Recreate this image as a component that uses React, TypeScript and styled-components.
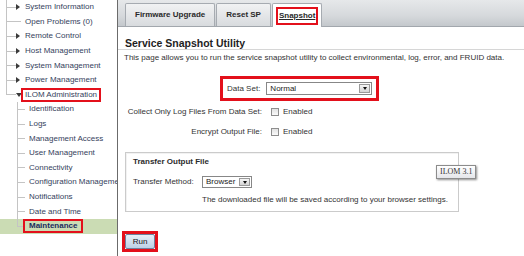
import React from 'react'
import styled, { createGlobalStyle } from 'styled-components'

const GlobalStyle = createGlobalStyle`
    html, body {
        margin: 0;
        padding: 0;
        background: #fff;
    }

    body {
        font-family: "Liberation Sans", Arial, sans-serif;
        font-size: 8px;
        line-height: 10px;
        color: #333;
    }
`

const RED = '#e3101b'
const LINE = '#c4c4c4'

const Page = styled.div`
    display: flex;
    width: 524px;
    height: 256px;
    overflow: hidden;
    background: #fff;
`

/* ---------- sidebar tree ---------- */

const Sidebar = styled.div`
    width: 117px;
    flex-shrink: 0;
    border-right: 1px solid #6b6b6b;
    overflow: hidden;
    white-space: nowrap;
`

const TreeRow = styled.div<{ $indent: number; $active?: boolean }>`
    display: flex;
    align-items: center;
    height: 14.6px;
    padding-left: ${p => p.$indent}px;
    background: ${p => (p.$active ? '#cbdcb4' : 'transparent')};
    color: ${p => (p.$active ? '#1b2a5c' : '#35425c')};
    font-weight: ${p => (p.$active ? 'bold' : 'normal')};
`

const Branch = styled.span<{ $w: number; $end?: boolean }>`
    align-self: stretch;
    width: ${p => p.$w}px;
    flex-shrink: 0;
    background-image: linear-gradient(${LINE}, ${LINE}), linear-gradient(${LINE}, ${LINE});
    background-repeat: no-repeat;
    background-position: 0 0, 0 50%;
    background-size: 1px ${p => (p.$end ? '50%' : '100%')}, 100% 1px;
`

const Arrow = styled.span<{ $open?: boolean }>`
    width: 0;
    height: 0;
    flex-shrink: 0;
    ${p =>
        p.$open
            ? `border-left: 3px solid transparent;
               border-right: 3px solid transparent;
               border-top: 4px solid #3a3a3a;`
            : `border-top: 3px solid transparent;
               border-bottom: 3px solid transparent;
               border-left: 4px solid #3a3a3a;`}
`

const NodeLabel = styled.span<{ $gap: number }>`
    margin-left: ${p => p.$gap}px;
`

const Mark = styled.span<{ $w?: number; $pad?: number }>`
    display: inline-block;
    border: ${p => p.$w ?? 2}px solid ${RED};
    padding: 0 ${p => p.$pad ?? 2}px;
    margin: 0 -${p => (p.$w ?? 2) + (p.$pad ?? 2)}px;
`

type Node = {
    label: string
    level: 0 | 1
    arrow?: 'right' | 'down'
    end?: boolean
    marked?: boolean
    active?: boolean
}

const tree: Node[] = [
    { label: 'System Information', level: 0, arrow: 'right' },
    { label: 'Open Problems (0)', level: 0 },
    { label: 'Remote Control', level: 0, arrow: 'right' },
    { label: 'Host Management', level: 0, arrow: 'right' },
    { label: 'System Management', level: 0, arrow: 'right' },
    { label: 'Power Management', level: 0, arrow: 'right' },
    { label: 'ILOM Administration', level: 0, arrow: 'down', end: true, marked: true },
    { label: 'Identification', level: 1 },
    { label: 'Logs', level: 1 },
    { label: 'Management Access', level: 1 },
    { label: 'User Management', level: 1 },
    { label: 'Connectivity', level: 1 },
    { label: 'Configuration Management', level: 1 },
    { label: 'Notifications', level: 1 },
    { label: 'Date and Time', level: 1 },
    { label: 'Maintenance', level: 1, end: true, marked: true, active: true },
]

function TreeNode({ node }: { node: Node }) {
    const text = node.marked ? (
        <Mark $pad={node.active ? 4 : 2}>{node.label}</Mark>
    ) : (
        node.label
    )

    if (node.level === 1) {
        return (
            <TreeRow $indent={17} $active={node.active}>
                <Branch $w={8} $end={node.end} />
                <NodeLabel $gap={4}>{text}</NodeLabel>
            </TreeRow>
        )
    }

    return (
        <TreeRow $indent={6}>
            <Branch $w={node.arrow ? 10 : 15} $end={node.end} />
            {node.arrow && <Arrow $open={node.arrow === 'down'} />}
            <NodeLabel $gap={node.arrow === 'down' ? 3 : node.arrow ? 5 : 4}>{text}</NodeLabel>
        </TreeRow>
    )
}

/* ---------- tabs ---------- */

const Main = styled.div`
    flex: 1;
    min-width: 0;
    display: flex;
    flex-direction: column;
`

const TabBar = styled.div`
    height: 27px;
    box-sizing: border-box;
    display: flex;
    align-items: flex-end;
    gap: 1px;
    padding-left: 7px;
    background: linear-gradient(#e6e8ea, #d6d9dc 60%, #c4c8cc);
    border-bottom: 1px solid #a2a7ad;
`

const Tab = styled.div<{ $active?: boolean }>`
    height: ${p => (p.$active ? 24 : 23)}px;
    margin-bottom: ${p => (p.$active ? -1 : 0)}px;
    box-sizing: border-box;
    display: flex;
    align-items: center;
    padding: 0 ${p => (p.$active ? 3 : 9)}px;
    font-weight: bold;
    color: #2a2a2a;
    white-space: nowrap;
    border: 1px solid #a6abb1;
    border-bottom: none;
    border-radius: 2px 2px 0 0;
    background: ${p => (p.$active ? '#fff' : 'linear-gradient(#f1f2f3, #d8dbde)')};
`

const TabMark = styled.span`
    border: 2px solid ${RED};
    padding: 2px 1px;
    text-decoration: underline;
`

/* ---------- page body ---------- */

const Heading = styled.h1`
    margin: 10px 0 0;
    padding: 0 7px;
    font-size: 10.5px;
    line-height: 12px;
    font-weight: bold;
    color: #1e1e1e;
    border-bottom: 1px solid #d6d6d6;
`

const Body = styled.div`
    padding: 0 7px;
    display: flex;
    flex-direction: column;
    align-items: flex-start;
`

const Intro = styled.p`
    margin: 3px 0 0 -1px;
    white-space: nowrap;
`

const DataSetRow = styled.div`
    margin-top: 13px;
    padding-left: 95px;
`

const RedBox = styled.div<{ $w?: number }>`
    display: flex;
    align-items: center;
    gap: 6px;
    border: ${p => p.$w ?? 3}px solid ${RED};
`

const DataSetBox = styled(RedBox)`
    padding: 3px 4px;
`

const Options = styled.div`
    margin-top: 1px;
    display: grid;
    grid-template-columns: 137px auto;
    grid-auto-rows: 20px;
    align-items: center;
`

const FieldLabel = styled.span`
    text-align: right;
    white-space: nowrap;
`

const Check = styled.span`
    display: flex;
    align-items: center;
    margin-left: 9px;
    gap: 4px;
`

const CheckBox = styled.span`
    width: 8px;
    height: 8px;
    box-sizing: border-box;
    border: 1px solid #8e8e8e;
    background: linear-gradient(#e2e2e2, #fbfbfb);
`

const SelectBox = styled.div<{ $w: number; $h: number }>`
    display: flex;
    width: ${p => p.$w}px;
    height: ${p => p.$h}px;
    box-sizing: border-box;
    border: 1px solid #878787;
    background: #fff;
    color: #222;
`

const SelectText = styled.span`
    flex: 1;
    display: flex;
    align-items: center;
    padding-left: 3px;
`

const SelectButton = styled.span`
    width: 9px;
    margin: 1px;
    display: flex;
    align-items: center;
    justify-content: center;
    border: 1px solid #9a9a9a;
    background: linear-gradient(#f6f6f6, #d4d4d4);

    &::after {
        content: '';
        border-left: 2.5px solid transparent;
        border-right: 2.5px solid transparent;
        border-top: 3px solid #111;
    }
`

function Select({ value, w, h }: { value: string; w: number; h: number }) {
    return (
        <SelectBox $w={w} $h={h}>
            <SelectText>{value}</SelectText>
            <SelectButton />
        </SelectBox>
    )
}

const Fieldset = styled.div`
    position: relative;
    margin-top: 10px;
    width: 334px;
    height: 60px;
    box-sizing: border-box;
    padding: 4px 7px 0;
    border: 1px solid #cbcbcb;
    box-shadow: inset 1px 1px 0 #f2f2f2;
    display: grid;
    grid-template-columns: 69px auto;
    align-content: start;
`

const LegendText = styled.div`
    grid-column: 1 / -1;
    font-weight: bold;
    color: #2c2c2c;
`

const MethodLabel = styled.span`
    margin-top: 8px;
    display: flex;
    align-items: center;
    white-space: nowrap;
`

const MethodSelect = styled.div`
    margin-top: 9px;
    height: 12px;
    display: flex;
    align-items: center;
`

const Note = styled.div`
    grid-column: 2;
    margin-top: 7px;
    white-space: nowrap;
`

const Badge = styled.div`
    position: absolute;
    left: 310px;
    top: 12px;
    padding: 1px 3px;
    white-space: nowrap;
    border: 1px solid #8c8c8c;
    background: linear-gradient(#ffffff, #e5e6ea);
    box-shadow: 1px 1px 2px rgba(0, 0, 0, 0.45);
    font-family: "Liberation Serif", "Times New Roman", serif;
    font-size: 8px;
    line-height: 10px;
    color: #333;
`

const RunBox = styled(RedBox)`
    margin: 19px 0 0 -3px;
`

const RunButton = styled.button`
    width: 30px;
    height: 15px;
    padding: 0;
    font-family: inherit;
    font-size: 8px;
    color: #141414;
    border: 1px solid #6d82a0;
    border-radius: 2px;
    background: linear-gradient(#e6eff9, #bdd1e7);
`

export default function App() {
    return (
        <Page>
            <GlobalStyle />
            <Sidebar>
                {tree.map(node => (
                    <TreeNode key={node.label} node={node} />
                ))}
            </Sidebar>

            <Main>
                <TabBar>
                    <Tab>Firmware Upgrade</Tab>
                    <Tab>Reset SP</Tab>
                    <Tab $active>
                        <TabMark>Snapshot</TabMark>
                    </Tab>
                </TabBar>

                <Heading>Service Snapshot Utility</Heading>

                <Body>
                    <Intro>
                        This page allows you to run the service snapshot utility to collect environmental, log, error, and FRUID data.
                    </Intro>

                    <DataSetRow>
                        <DataSetBox>
                            <FieldLabel>Data Set:</FieldLabel>
                            <Select value="Normal" w={106} h={13} />
                        </DataSetBox>
                    </DataSetRow>

                    <Options>
                        <FieldLabel>Collect Only Log Files From Data Set:</FieldLabel>
                        <Check>
                            <CheckBox />
                            Enabled
                        </Check>
                        <FieldLabel>Encrypt Output File:</FieldLabel>
                        <Check>
                            <CheckBox />
                            Enabled
                        </Check>
                    </Options>

                    <Fieldset>
                        <LegendText>Transfer Output File</LegendText>
                        <MethodLabel>Transfer Method:</MethodLabel>
                        <MethodSelect>
                            <Select value="Browser" w={50} h={12} />
                        </MethodSelect>
                        <Note>The downloaded file will be saved according to your browser settings.</Note>
                        <Badge>ILOM 3.1</Badge>
                    </Fieldset>

                    <RunBox>
                        <RunButton>Run</RunButton>
                    </RunBox>
                </Body>
            </Main>
        </Page>
    )
}
